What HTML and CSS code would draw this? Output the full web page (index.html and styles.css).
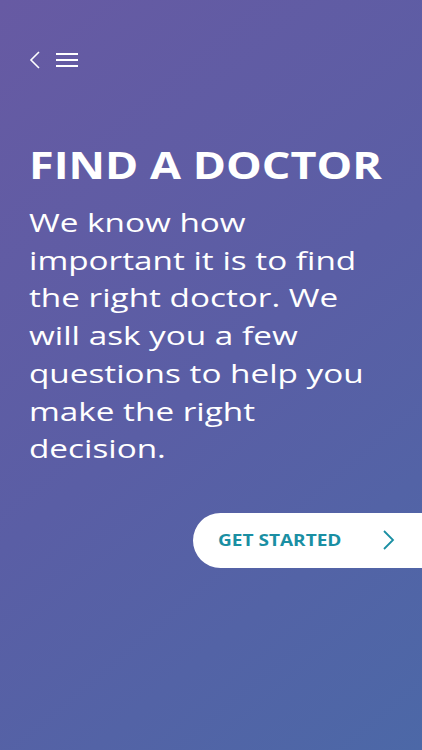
FILE: index.html
```html
<!DOCTYPE html>
<html lang="en">
<head>
    <meta charset="UTF-8">
    <meta name="viewport" content="width=device-width, initial-scale=1.0">
    <title>Find a Doctor</title>
    <link rel="stylesheet" href="styles.css">
</head>
<body>
<div class="screen">
    <div class="topbar">
        <button class="icon-btn back" aria-label="Back">
            <svg width="14" height="20" viewBox="0 0 14 20"><path d="M11 2 L3 10 L11 18" fill="none" stroke="#fff" stroke-width="1.6"/></svg>
        </button>
        <button class="icon-btn menu" aria-label="Menu">
            <svg width="22" height="16" viewBox="0 0 22 16"><path d="M0 2 H22 M0 8 H22 M0 14 H22" fill="none" stroke="#fff" stroke-width="2"/></svg>
        </button>
    </div>

    <h1 class="title">FIND A DOCTOR</h1>
    <p class="intro">We know how important it is to find the right doctor. We will ask you a few questions to help you make the right decision.</p>

    <div class="cta-row">
        <button class="cta">
            <span class="cta-label">GET STARTED</span>
            <svg width="14" height="22" viewBox="0 0 14 22"><path d="M2 2 L11 11 L2 20" fill="none" stroke="#1a8fa3" stroke-width="1.8"/></svg>
        </button>
    </div>
</div>
</body>
</html>
```

FILE: styles.css
```css
body {
    margin: 0;
    font-family: "Open Sans", "Noto Sans", sans-serif;
    color: #fff;
}
.screen {
    width: 422px;
    height: 750px;
    background: linear-gradient(140deg, #675aa3 0%, #5a5ea5 50%, #4c68a7 100%);
    overflow: hidden;
}
.topbar {
    display: flex;
    align-items: center;
    gap: 14px;
    padding: 50px 0 0 28px;
}
.icon-btn {
    background: none;
    border: none;
    padding: 0;
    display: flex;
}
/* the design uses a wide face, so the text is stretched sideways */
.title {
    margin: 76px 0 0 29px;
    font-size: 37px;
    font-weight: 700;
    line-height: 1;
    transform: scaleX(1.215);
    transform-origin: left;
}
.intro {
    width: 274px;
    margin: 21px 0 0 29px;
    font-size: 26px;
    line-height: 37.7px;
    font-weight: 400;
    transform: scaleX(1.28);
    transform-origin: left;
}
.cta-row {
    display: flex;
    justify-content: flex-end;
    margin-top: 45px;
}
.cta {
    width: 229px;
    height: 55px;
    background: #fff;
    border: none;
    border-radius: 28px 0 0 28px;
    display: flex;
    align-items: center;
    justify-content: space-between;
    padding: 0 26px 0 25px;
    font-family: "Open Sans", sans-serif;
    font-size: 16px;
    font-weight: 700;
    color: #1a8fa3;
}
.cta-label {
    transform: scaleX(1.19);
    transform-origin: left;
}
```
